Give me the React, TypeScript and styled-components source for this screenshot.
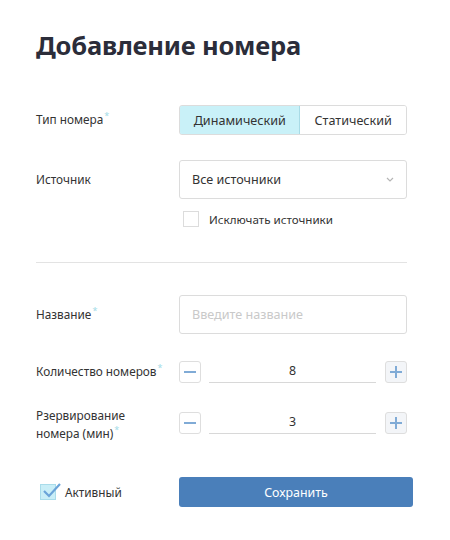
import React from "react";
import styled, { createGlobalStyle } from "styled-components";

const Global = createGlobalStyle`
  html, body { margin: 0; padding: 0; background: #fff; }
  body { font-family: "Noto Sans", "Open Sans", sans-serif; color: #333; }
  * { box-sizing: border-box; }
`;

const Page = styled.div`
  width: 450px;
  padding: 26px 43px 0 36px;
`;

const Title = styled.h1`
  margin: 0 0 41px 0;
  font-size: 25.5px;
  line-height: 38px;
  font-weight: 700;
  color: #2b2d3a;
  letter-spacing: -0.2px;
`;

const Row = styled.div<{ $mb: number }>`
  display: grid;
  grid-template-columns: 143px 228px;
  align-items: start;
  margin-bottom: ${(p) => p.$mb}px;
`;

const Label = styled.div<{ $h: number }>`
  min-height: ${(p) => p.$h}px;
  display: flex;
  align-items: center;
  font-size: 11.8px;
  line-height: 18px;
  color: #333;
  padding-bottom: 2px;
`;

const TwoLine = styled.span`
  margin-top: -6px;
`;

const Star = styled.sup`
  color: #a3dbe7;
  font-size: 9px;
  vertical-align: top;
  line-height: 12px;
  margin-left: 1px;
`;

const Segmented = styled.div`
  display: flex;
  height: 30px;
  border: 1px solid #dcdcdc;
  border-radius: 3px;
  overflow: hidden;
`;

const Seg = styled.div<{ $active?: boolean }>`
  display: flex;
  align-items: center;
  justify-content: center;
  width: ${(p) => (p.$active ? 122 : 106)}px;
  font-size: 12.6px;
  color: #333;
  background: ${(p) => (p.$active ? "#c9f1f8" : "#fff")};
  margin: ${(p) => (p.$active ? "-1px 0 -1px -1px" : "0")};
  border: ${(p) => (p.$active ? "1px solid #bfe5ee" : "none")};
  border-right-color: #a8dbe6;
  border-radius: ${(p) => (p.$active ? "3px 0 0 3px" : "0")};
`;

const Column = styled.div`
  display: flex;
  flex-direction: column;
`;

const Select = styled.div`
  height: 39px;
  border: 1px solid #dcdcdc;
  border-radius: 3px;
  display: flex;
  align-items: center;
  justify-content: space-between;
  padding: 0 12px 0 12px;
  font-size: 12.6px;
  color: #333;
`;

const Check = styled.label`
  display: flex;
  align-items: center;
  gap: 10px;
  margin-top: 12px;
  margin-left: 4px;
  font-size: 11.6px;
  color: #333;
`;

const Box = styled.span<{ $checked?: boolean }>`
  position: relative;
  width: 16px;
  height: 16px;
  border: 1px solid ${(p) => (p.$checked ? "#a9dcea" : "#dcdcdc")};
  background: ${(p) => (p.$checked ? "#c9eef7" : "#fff")};
  flex: none;
`;

const Tick = styled.svg`
  position: absolute;
  left: 1px;
  top: -5px;
`;

const Divider = styled.hr`
  border: none;
  border-top: 1px solid #e3e3e3;
  margin: 35px 0 32px 0;
  width: 371px;
`;

const Input = styled.div`
  height: 39px;
  border: 1px solid #dcdcdc;
  border-radius: 3px;
  display: flex;
  align-items: center;
  padding: 0 12px;
  font-size: 12.6px;
  color: #c9c9c9;
`;

const Counter = styled.div`
  display: flex;
  align-items: center;
  height: 22px;
`;

const StepBtn = styled.div<{ $filled?: boolean }>`
  width: 22px;
  height: 22px;
  border: 1px solid #dedede;
  border-radius: 3px;
  background: ${(p) => (p.$filled ? "#f3f5f8" : "#fff")};
  display: flex;
  align-items: center;
  justify-content: center;
  flex: none;
`;

const Value = styled.div`
  width: 168px;
  margin: 0 9px 0 8px;
  height: 22px;
  border-bottom: 1px solid #d8d8d8;
  text-align: center;
  font-size: 12.4px;
  line-height: 20px;
  color: #333;
`;

const Footer = styled.div`
  display: grid;
  grid-template-columns: 143px 234px;
  align-items: center;
`;

const ActiveCheck = styled.label`
  display: flex;
  align-items: center;
  gap: 9px;
  margin-left: 4px;
  font-size: 11.8px;
  color: #333;
`;

const SaveButton = styled.button`
  height: 30px;
  border: none;
  border-radius: 3px;
  background: #4a7fba;
  color: #fff;
  font-family: inherit;
  font-size: 12.4px;
  padding: 0;
`;

const Minus = () => (
  <svg width="12" height="12" viewBox="0 0 12 12">
    <rect x="0" y="5" width="12" height="2" fill="#80abd6" />
  </svg>
);
const Plus = () => (
  <svg width="12" height="12" viewBox="0 0 12 12">
    <rect x="0" y="5" width="12" height="2" fill="#80abd6" />
    <rect x="5" y="0" width="2" height="12" fill="#80abd6" />
  </svg>
);

const Stepper = ({ value }: { value: number }) => (
  <Counter>
    <StepBtn>
      <Minus />
    </StepBtn>
    <Value>{value}</Value>
    <StepBtn $filled>
      <Plus />
    </StepBtn>
  </Counter>
);

export default function App() {
  return (
    <Page>
      <Global />
      <Title>Добавление номера</Title>

      <Row $mb={25}>
        <Label $h={30}>
          <span>
            Тип номера<Star>*</Star>
          </span>
        </Label>
        <Segmented>
          <Seg $active>Динамический</Seg>
          <Seg>Статический</Seg>
        </Segmented>
      </Row>

      <Row $mb={0}>
        <Label $h={39}>Источник</Label>
        <Column>
          <Select>
            <span>Все источники</span>
            <svg width="8" height="5" viewBox="0 0 8 5">
              <path d="M1 1 L4 4 L7 1" stroke="#b5b5b5" strokeWidth="1.2" fill="none" />
            </svg>
          </Select>
          <Check>
            <Box />
            Исключать источники
          </Check>
        </Column>
      </Row>

      <Divider />

      <Row $mb={27}>
        <Label $h={39}>
          <span>
            Название<Star>*</Star>
          </span>
        </Label>
        <Input>Введите название</Input>
      </Row>

      <Row $mb={29}>
        <Label $h={22}>
          <span>
            Количество номеров<Star>*</Star>
          </span>
        </Label>
        <Stepper value={8} />
      </Row>

      <Row $mb={33}>
        <Label $h={22}>
          <TwoLine>
            Рзервирование
            <br />
            номера (мин)<Star>*</Star>
          </TwoLine>
        </Label>
        <Stepper value={3} />
      </Row>

      <Footer>
        <ActiveCheck>
          <Box $checked>
            <Tick width="20" height="20" viewBox="0 0 20 20">
              <path d="M2 11 L7 16 L18 4" stroke="#6aa3d8" strokeWidth="2.2" fill="none" />
            </Tick>
          </Box>
          Активный
        </ActiveCheck>
        <SaveButton>Сохранить</SaveButton>
      </Footer>
    </Page>
  );
}
